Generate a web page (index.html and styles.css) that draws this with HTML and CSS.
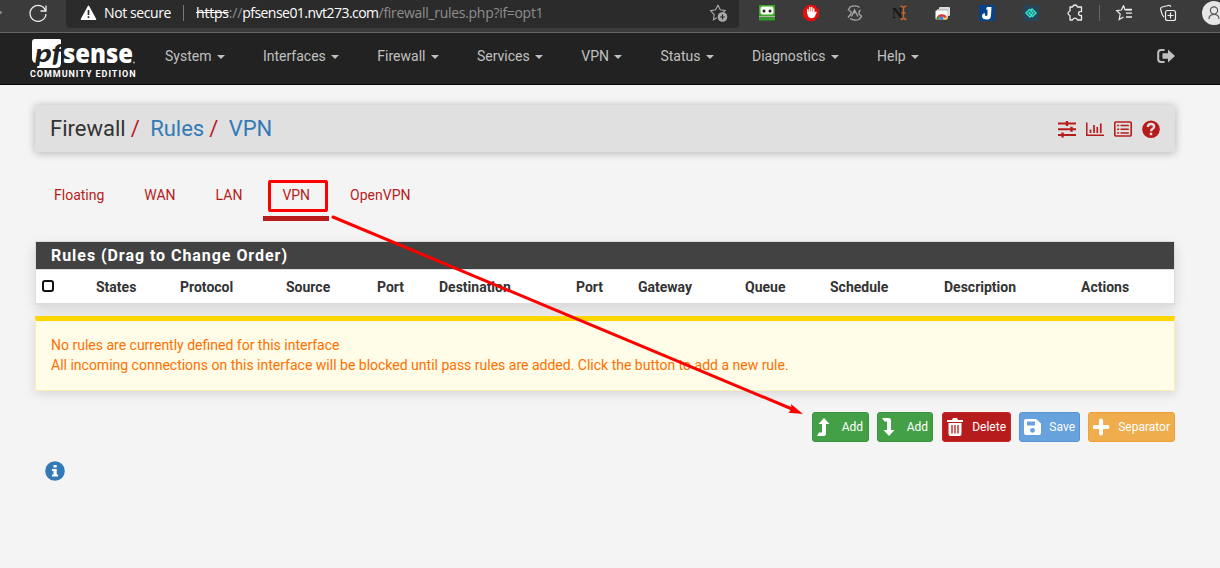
FILE: index.html
```html
<!DOCTYPE html>
<html lang="en">
<head>
<meta charset="utf-8">
<title>pfSense - Firewall: Rules: VPN</title>
<link rel="stylesheet" href="styles.css">
</head>
<body>
<header class="browser">
  <div class="browser-left">
    <svg width="66" height="32" viewBox="0 0 66 32"><circle cx="0" cy="12.500" r="1.800" fill="#888"/><path d="M45.500 10.500A8 8 0 1 0 46 14M46 5.500v5.500h-5.500" fill="none" stroke="#eee" stroke-width="1.300"/></svg>
  </div>
  <div class="address">
    <svg width="17" height="16" viewBox="0 0 17 16"><path d="M8.500 1.300 15.600 14.300H1.400Z" fill="#fff" stroke="#fff" stroke-width="1.400" stroke-linejoin="round"/><path d="M8.500 5v5M8.500 11.300v1.700" stroke="#2b2b2b" stroke-width="1.700"/></svg>
    <span class="not-secure">Not secure</span>
    <span class="address-sep"></span>
    <span class="url"><span class="scheme"><s>https</s>://</span><b>pfsense01.nvt273.com</b>/firewall_rules.php?if=opt1</span>
    <svg class="fav" width="20" height="20" viewBox="0 0 20 20"><path d="M9 2l2.200 4.700 5 .7-3.500 3.600M8 14.700 4.400 16.700l.8-5.100L1.600 7.700l5-.9L9 2" fill="none" stroke="#aaa" stroke-width="1.100"/><circle cx="13.500" cy="14" r="4.800" fill="#aaa"/><path d="M13.500 11.500v5M11 14h5" stroke="#2b2b2b" stroke-width="1.200"/></svg>
  </div>
  <svg class="extensions" width="481" height="32" viewBox="739 0 481 32">
    <rect x="759" y="5" width="16" height="11" rx="1" fill="#41a52b"/><rect x="760.500" y="6.500" width="13" height="8" rx="2" fill="#f5fff2"/><circle cx="764" cy="11" r="1.500" fill="#222"/><circle cx="770" cy="11" r="1.500" fill="#222"/><path d="M759 16.800h16" stroke="#d8edc8"/><path d="M759 19h16" stroke="#319c27" stroke-width="3"/>
    <path d="M807.700 5h6.600l4.700 4.700v6.600l-4.700 4.700h-6.600l-4.700-4.700V9.700Z" fill="#e50c0c"/><path d="M807.800 13V9.500M809.800 12V7.500M811.800 12V7.500M813.800 13V9" stroke="#fff" stroke-width="1.500" stroke-linecap="round"/><path d="M807 11.500h7.600v1.500l1-1.600 1.300.7-2.500 5.200q-3.500 2.400-6.400-.7Z" fill="#fff"/>
    <path d="M848 10.500l2-3.500q6-2.500 9.500.5M849 10.500q3.500 1 1.500 4l-2.500 3M861.500 16.500l-2.500 3q-5 1.500-9-1M860.500 10q-3 3-.5 5l2 1.500" fill="none" stroke="#aaa" stroke-width="1.300"/><path d="m851.500 16.500 3-6.500 3.500 6.500M854.500 9.500v4" fill="none" stroke="#aaa" stroke-width="1.300"/>
    <text x="892" y="18" class="ext-n">N</text><path d="M900.500 6q2.500 0 3 2 .5-2 3-2M903.500 8v9M900.500 19.500q2.500 0 3-2 .5 2 3 2M901.500 13h4" fill="none" stroke="#c8672b" stroke-width="1.400"/>
    <rect x="939" y="7" width="11" height="9" rx="1" fill="#ddd"/><rect x="937" y="9" width="11" height="9" rx="1" fill="#bbb"/><rect x="935.500" y="10.500" width="12" height="9" rx="1" fill="#fff"/><path d="M937.500 19.500a4.500 4.500 0 0 1 8.500-1.500" fill="none" stroke="#df3830" stroke-width="2.500"/><path d="M937 17v2.500h3l-1.500-4Z" fill="#25a249"/><path d="M944.500 17.500l2-.5v2.500h-3Z" fill="#f6c21c"/><circle cx="941.700" cy="18.300" r="1.700" fill="#3579e4"/>
    <rect x="979" y="5" width="16" height="16" fill="#06438a"/><path d="M987 7h4.500l-.5 8q0 4.500-4 4.500-5 0-5-3.500 0-2.500 3-3-.7 3 1.300 3 1.200 0 1.200-2v-4.500h-1.500Z" fill="#fff"/>
    <rect x="1023" y="5" width="16" height="16" rx="2" fill="#29435a"/><path d="m1030 9-4 4 4 4 1.500-1.500-2.500-2.500 2.500-2.500M1032 17l4-4-4-4-1.500 1.500L1033 13l-2.500 2.500" fill="none" stroke="#2fe6c5" stroke-width="1.500"/>
    <path d="M1070 7h2.500q.7-2 2.500-2t2.500 2h4v4.500q-3-.3-3 2t3 2V20h-4q-.8-1.800-2.500-1.800t-2.500 1.800h-2.500v-4.500q-2-.7-2-2.200t2-2.300Z" fill="none" stroke="#eee" stroke-width="1.300" stroke-linejoin="round"/>
    <path d="M1099.500 5v16" stroke="#666"/>
    <path d="M1123.500 5.500l1.500 4.300h6.500M1121.500 10l2-4.500M1121.500 10l-4.800.7 3.500 3.300-1 5.500 4.300-2.600" fill="none" stroke="#eee" stroke-width="1.200"/><path d="M1126 9.500h6M1126 13.200h6M1126 17h6" stroke="#eee" stroke-width="1.300"/>
    <path d="M1164 17q-2-1.500-2.300-4l-1-3.500q-.5-2 1.500-2.500l6-1.500q2-.5 2.700 1.300" fill="none" stroke="#eee" stroke-width="1.200"/><rect x="1165.500" y="10.500" width="10" height="10" rx="2" fill="#3b3b3b" stroke="#eee" stroke-width="1.200"/><path d="M1170.500 12.500v6M1167.500 15.500h6" stroke="#eee" stroke-width="1.200"/>
    <circle cx="1214" cy="13" r="12" fill="#e6e6e6"/><circle cx="1214" cy="10.500" r="3.600" fill="none" stroke="#555" stroke-width="1.200"/><path d="M1209 19q0-4.500 5-4.500t5 4.500" fill="none" stroke="#555" stroke-width="1.200"/>
  </svg>
</header>

<nav class="navbar">
  <div class="brand">
    <svg class="logo" width="112" height="30" viewBox="0 0 112 30"><path d="M5 0h24q2 0 2 1v23q0 5-5 5H7l1-5Q2 25 2 19V3q0-3 3-3Z" fill="#fff"/><text x="5" y="23" class="logo-pf" textLength="27" lengthAdjust="spacingAndGlyphs">pf</text><text x="33" y="23.500" class="logo-sense" textLength="70" lengthAdjust="spacingAndGlyphs">sense</text><circle cx="104" cy="23.500" r="1" fill="#aaa"/></svg>
    <span class="edition">COMMUNITY EDITION</span>
  </div>
  <ul class="menu">
    <li>System</li><li>Interfaces</li><li>Firewall</li><li>Services</li><li>VPN</li><li>Status</li><li>Diagnostics</li><li>Help</li>
  </ul>
  <svg class="logout" width="18" height="14" viewBox="0 0 18 14"><path d="M7.500 1H4Q1.200 1 1.200 4v6Q1.200 13 4 13h3.500" fill="none" stroke="#c0c0c0" stroke-width="2"/><path d="M5.500 4.200H11V.6L18 7l-7 6.400V9.800H5.500Z" fill="#c0c0c0"/></svg>
</nav>

<main class="container">
  <div class="page-header">
    <div class="crumbs"><span>Firewall</span><i>/</i><a>Rules</a><i>/</i><a>VPN</a></div>
    <div class="shortcuts">
      <svg width="18" height="18" viewBox="0 0 18 18"><path d="M0 3.500h18M0 9.200h18M0 15h18" stroke="#b71c1c" stroke-width="1.900"/><path d="M9 1v5M13.500 6.700v5M4.500 12.500v5" stroke="#b71c1c" stroke-width="2.400"/></svg>
      <svg width="18" height="18" viewBox="0 0 18 18"><path d="M.8 2.500v12.800H18" fill="none" stroke="#b71c1c" stroke-width="1.500"/><path d="M4.500 9.500v3.500M8 5v8M11.300 7v6M14.800 3.500V13" stroke="#b71c1c" stroke-width="1.700"/></svg>
      <svg width="18" height="18" viewBox="0 0 18 18"><rect x=".8" y="2" width="16.400" height="14" rx="1" fill="none" stroke="#b71c1c" stroke-width="1.600"/><path d="M3.200 5.500h2M3.200 9.200h2M3.200 12.900h2M6.500 5.500h8.300M6.500 9.200h8.300M6.500 12.900h8.300" stroke="#b71c1c" stroke-width="1.500"/></svg>
      <svg width="18" height="18" viewBox="0 0 18 18"><circle cx="9" cy="9.200" r="8.800" fill="#b71c1c"/><path d="M5.800 7Q6 4 9 4t3.200 2.700c0 2-3.200 2.200-3.200 4.500" fill="none" stroke="#e0e0e0" stroke-width="2.300"/><path d="M9 12.700v2.500" stroke="#e0e0e0" stroke-width="2.500"/></svg>
    </div>
  </div>

  <ul class="tabs"><li>Floating</li><li>WAN</li><li>LAN</li><li class="active">VPN</li><li>OpenVPN</li></ul>

  <section class="panel">
    <h2>Rules (Drag to Change Order)</h2>
    <div class="columns">
      <span class="check"></span><span>States</span><span>Protocol</span><span>Source</span><span>Port</span><span>Destination</span><span>Port</span><span>Gateway</span><span>Queue</span><span>Schedule</span><span>Description</span><span>Actions</span>
    </div>
  </section>

  <div class="alert"><p>No rules are currently defined for this interface</p><p>All incoming connections on this interface will be blocked until pass rules are added. Click the button to add a new rule.</p></div>

  <div class="actions">
    <button class="btn green add-top"><svg width="14" height="20" viewBox="0 0 14 20"><path d="M0 19l2-3.500h3V7H1.500L7 1l5.500 6H9v9.500Q9 19 6.500 19Z" fill="#fff"/></svg>Add</button>
    <button class="btn green add-end"><svg width="14" height="20" viewBox="0 0 14 20"><path d="M0 1h6.500Q9 1 9 3.500V13h3.500L7 19l-5.500-6H5V4.500H2.500Z" fill="#fff"/></svg>Add</button>
    <button class="btn red"><svg width="16" height="20" viewBox="0 0 16 20"><path d="M0 3h5l1-2h4l1 2h5v2H0ZM1.500 6h13v10.500q0 2.500-2 2.500h-9q-2 0-2-2.500Z" fill="#fff"/><path d="M5 8v8.500M8 8v8.500M11 8v8.500" stroke="#b71c1c" stroke-width="1.300"/></svg>Delete</button>
    <button class="btn blue"><svg width="17" height="18" viewBox="0 0 17 18"><path d="M2 1h10l5 4.500V15q0 2-2 2H2q-2 0-2-2V3q0-2 2-2Z" fill="#fff"/><path d="M3 3.500h8v4H3Z" fill="#67a2dd"/><circle cx="8.500" cy="12.300" r="2.400" fill="#67a2dd"/></svg>Save</button>
    <button class="btn orange"><svg width="17" height="18" viewBox="0 0 17 18"><path d="M8 2.500v13M1.500 9h13" stroke="#fff" stroke-width="4" stroke-linecap="round"/></svg>Separator</button>
  </div>

  <svg class="info" width="20" height="20" viewBox="0 0 20 20"><circle cx="10" cy="10" r="9.800" fill="#337ab7"/><path d="M8.500 4h3.200v2.500H8.500ZM7 8h4.700v5.500H13v2H7v-2h1.500v-3.600H7Z" fill="#fff"/></svg>
</main>

<svg class="annotation" width="1220" height="568" viewBox="0 0 1220 568"><rect x="269.500" y="181.500" width="57" height="29" rx=".5" fill="none" stroke="#f00" stroke-width="3"/><path d="M333 217 792 409" stroke="#f00" stroke-width="3" stroke-linecap="round"/><path d="M803 414l-14.500-1.300 3-3.700-.5-5Z" fill="#f00"/></svg>
</body>
</html>
```
FILE: styles.css
```css
* { box-sizing: border-box; }
body { margin: 0; height: 568px; overflow: hidden; background: #f4f4f4; font: 14px/20px Roboto, sans-serif; color: #333; }
ul, h2, p { margin: 0; padding: 0; list-style: none; }
svg { display: block; flex: none; }

.browser { display: flex; height: 33px; background: #3b3b3b; border-bottom: 1px solid #636363; }
.browser-left { width: 66px; }
.address { display: flex; align-items: center; width: 673px; height: 28px; padding: 0 10px 2px 14px; background: #2b2b2b; border-radius: 0 0 4px 4px; font: 14px/20px "Open Sans", sans-serif; color: #8e8e8e; white-space: nowrap; }
.not-secure { margin-left: 7px; color: #fff; width: 79px; letter-spacing: -.4px; }
.address-sep { width: 1px; height: 16px; background: #777; }
.url { margin-left: 12px; letter-spacing: -.3px; }
.scheme { letter-spacing: -.2px; }
.url s { color: #fff; }
.url b { color: #fff; font-weight: 400; letter-spacing: -.53px; }
.fav { margin-left: auto; }
.ext-n { font: bold 14px "Liberation Serif", serif; fill: #151515; }

.navbar { display: flex; height: 52px; background: #222; border-bottom: 1px solid #080808; color: #c0c0c0; }
.brand { width: 135px; padding: 6px 0 0 30px; }
.logo { overflow: visible; }
.edition { display: block; font-size: 9px; line-height: 10px; font-weight: 700; color: #fff; letter-spacing: .95px; white-space: nowrap; }
.logo-pf { font: italic 900 25px Lato, sans-serif; fill: #222; }
.logo-sense { font: 800 26px "Open Sans", sans-serif; fill: #fff; }
.menu { display: flex; gap: 38px; margin-left: 30px; padding-top: 13px; }
.menu li { display: flex; align-items: center; height: 20px; }
.menu li::after { content: ""; margin: 2px 0 0 5.500px; border: 4px solid transparent; border-top-color: currentColor; border-bottom: 0; }
.logout { margin: 16px 45px 0 auto; }

.container { padding: 20px 45px 0 35px; }
.page-header { display: flex; justify-content: space-between; align-items: center; height: 47px; padding: 0 15px; background: #e0e0e0; border-radius: 3px; box-shadow: 0 1px 8px rgba(0,0,0,.28); }
.crumbs { display: flex; font-size: 22px; line-height: 28px; }
.crumbs i { width: 24.500px; padding-left: 5px; font-style: normal; color: #b71c1c; }
.crumbs a { color: #337ab7; }
.shortcuts { display: flex; gap: 10px; padding-top: 1px; }

.tabs { display: flex; margin-top: 26px; height: 43px; color: #b71c1c; }
.tabs li { height: 43px; padding: 7px 20px 0; border-bottom: 5px solid transparent; }
.tabs li:first-child { padding-left: 19px; }
.tabs .active { margin: 0 1px; padding: 7px 19px 0; border-color: #b71c1c; }

.panel { margin-top: 20px; height: 64px; border: 1px solid #ddd; border-bottom-width: 2px; background: #fff; box-shadow: 0 5px 12px rgba(0,0,0,.12); }
.panel h2 { height: 28px; padding-left: 15px; background: #424242; border-bottom: 1px solid #ddd; font-size: 16px; line-height: 28px; letter-spacing: .95px; color: #fff; }
.columns { display: grid; grid-template-columns: 60px 84px 106px 91px 62px 137px 62px 107px 85px 114px 137px 1fr; align-items: center; height: 34px; font-weight: 700; }
.check { width: 12px; height: 12px; margin: 0 0 3px 5.500px; border: 2px solid #111; border-radius: 3px; }

.alert { height: 75px; margin-top: 11px; padding: 14px 15px; border: 1px solid #ffecb3; border-top: 5px solid #ffd600; background: #fffde7; color: #ff6f00; box-shadow: 0 3px 10px rgba(0,0,0,.12); }
.actions { display: flex; justify-content: flex-end; gap: 8px; margin-top: 21px; }
.btn { display: flex; align-items: center; justify-content: space-between; height: 30px; padding: 0 4px; border: 1px solid; border-radius: 3px; font: 12px/18px Roboto, sans-serif; color: #fff; }
.green { background: #43a047; border-color: #3b923f; }
.add-top { width: 57px; padding-right: 5px; }
.add-end { width: 56px; }
.red { width: 69px; margin-left: 1px; background: #b71c1c; border-color: #c62828; }
.blue { width: 61px; background: #67a2dd; border-color: #5b94cd; }
.orange { width: 87px; background: #f0ad4e; border-color: #eea236; }
.info { margin: 19px 0 0 10px; }
.annotation { position: absolute; left: 0; top: 0; pointer-events: none; }
```
